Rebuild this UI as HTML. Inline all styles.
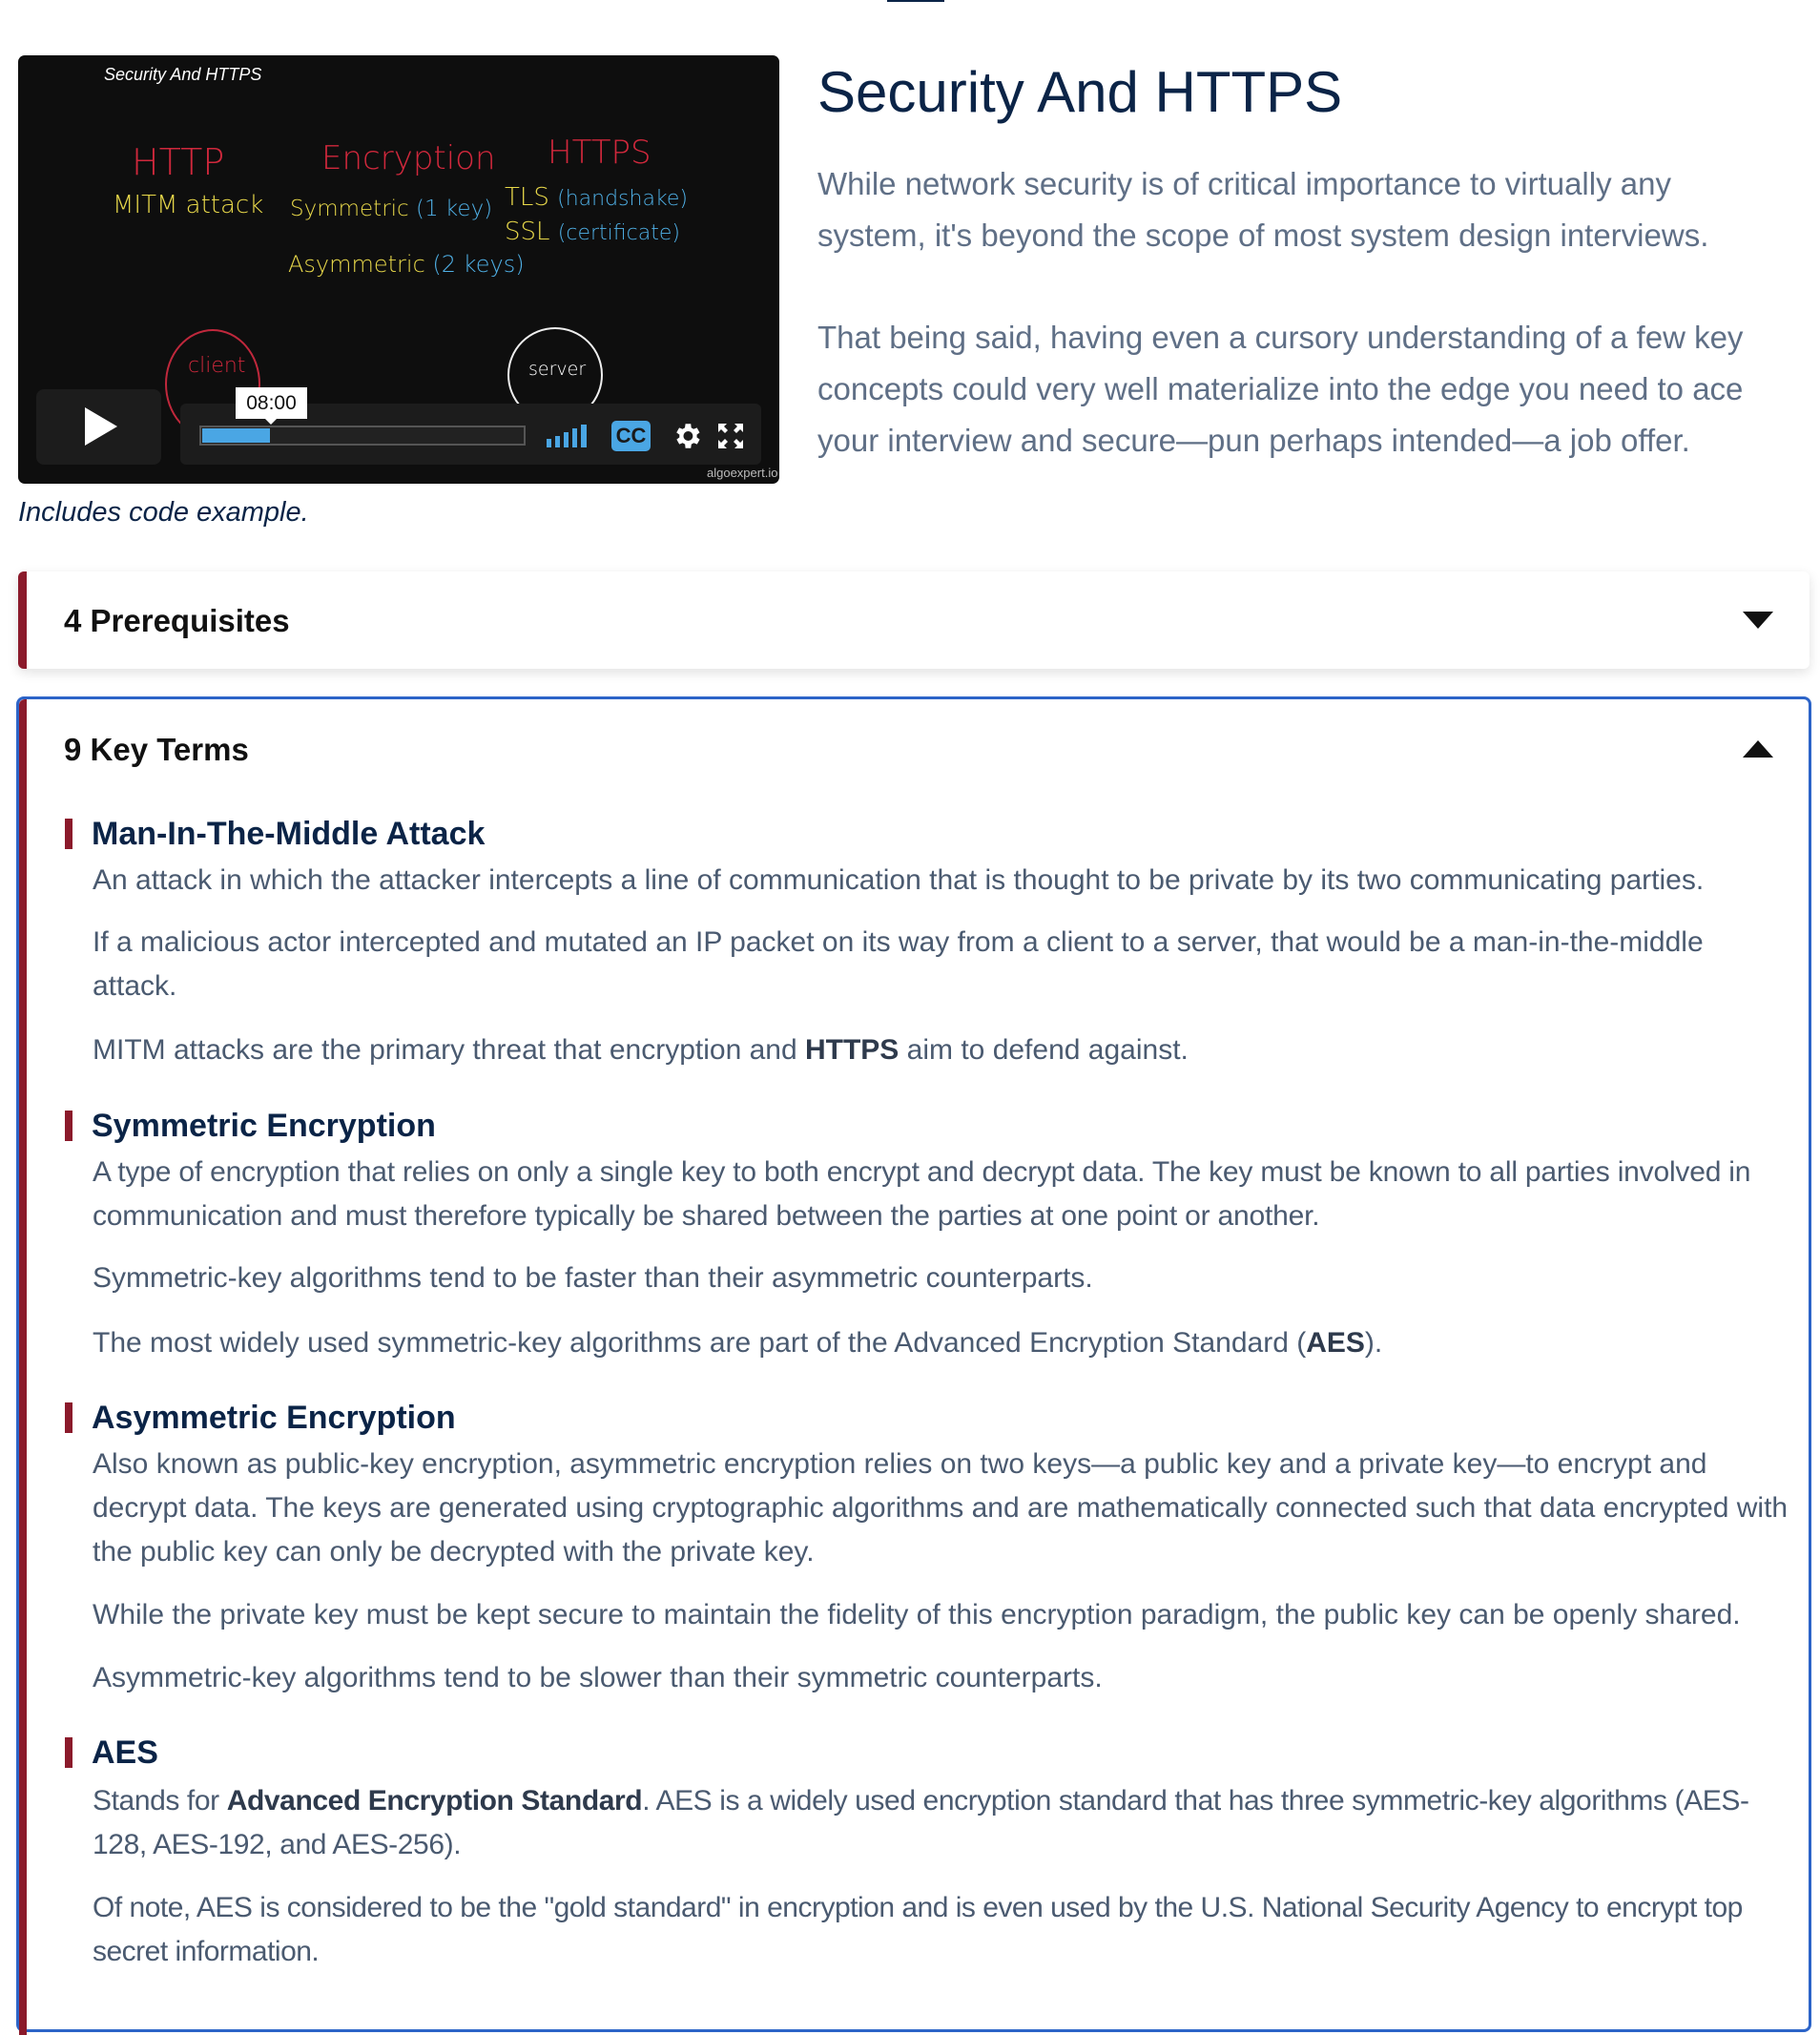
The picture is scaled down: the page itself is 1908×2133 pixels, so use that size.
<!DOCTYPE html>
<html><head><meta charset="utf-8"><style>
*{margin:0;padding:0;box-sizing:border-box}
body{width:1908px;height:2086px;overflow:hidden;background:#fff;font-family:"Liberation Sans",sans-serif;position:relative}
.a{position:absolute;white-space:nowrap}
.p{position:absolute;left:97px;font-size:30px;line-height:46px;color:#4a5a70;white-space:nowrap}
.p b{color:#2e3a4c}
.h{position:absolute;left:68px;font-size:34px;font-weight:bold;color:#0b2447;padding-left:20px;border-left:8px solid #8b1a2b;height:32px;line-height:32px}
.r{color:#5f6f86;font-size:33px;line-height:54px}
.hw{position:absolute;white-space:nowrap;font-family:"DejaVu Sans",sans-serif;font-weight:200}
</style></head><body>
<div class="a" style="left:930px;top:-10px;width:60px;height:12px;background:#0b2447"></div>
<!-- video -->
<div class="a" style="left:19px;top:58px;width:798px;height:449px;background:#0e0e0e;border-radius:7px;overflow:hidden">
 <div class="hw" style="left:90px;top:10px;color:#fff;font-size:18px;font-style:italic;font-family:'Liberation Sans'">Security And HTTPS</div>
 <div class="hw" style="left:119px;top:90px;color:#d0283c;font-size:38px">HTTP</div>
 <div class="hw" style="left:318px;top:88px;color:#d0283c;font-size:34px">Encryption</div>
 <div class="hw" style="left:555px;top:82px;color:#d0283c;font-size:34px">HTTPS</div>
 <div class="hw" style="left:99px;top:142px;color:#e8d84a;font-size:26px">MITM attack</div>
 <div class="hw" style="left:285px;top:148px;color:#e8d84a;font-size:23px">Symmetric <span style="color:#4fb0e6">(1 key)</span></div>
 <div class="hw" style="left:510px;top:134px;color:#e8d84a;font-size:26px">TLS <span style="color:#4fb0e6;font-size:22px">(handshake)</span></div>
 <div class="hw" style="left:510px;top:170px;color:#e8d84a;font-size:26px">SSL <span style="color:#4fb0e6;font-size:22px">(certificate)</span></div>
 <div class="hw" style="left:283px;top:205px;color:#e8d84a;font-size:24px">Asymmetric <span style="color:#4fb0e6">(2 keys)</span></div>
 <div class="a" style="left:154px;top:287px;width:100px;height:115px;border:2px solid #c0283c;border-radius:50%"></div>
 <div class="hw" style="left:178px;top:313px;color:#d0283c;font-size:22px">client</div>
 <div class="a" style="left:513px;top:285px;width:100px;height:100px;border:2px solid #eee;border-radius:50%"></div>
 <div class="hw" style="left:535px;top:318px;color:#fff;font-size:19px">server</div>
 <div class="a" style="left:19px;top:350px;width:131px;height:79px;background:#1c1c1c;border-radius:8px"></div>
 <svg class="a" style="left:66px;top:367px" width="40" height="44"><path d="M4 2L38 22L4 42Z" fill="#fff"/></svg>
 <div class="a" style="left:170px;top:365px;width:609px;height:64px;background:#1c1c1c;border-radius:6px"></div>
 <div class="a" style="left:190px;top:388px;width:342px;height:21px;border:2px solid #555;background:#222"></div>
 <div class="a" style="left:193px;top:391px;width:71px;height:15px;background:#4aa6e4"></div>
 <div class="a" style="left:228px;top:348px;width:75px;height:33px;background:#fff;font-size:21px;color:#111;text-align:center;line-height:33px">08:00</div>
 <svg class="a" style="left:258px;top:380px" width="14" height="8"><path d="M0 0L14 0L7 7Z" fill="#fff"/></svg>
 <svg class="a" style="left:554px;top:385px" width="48" height="26" fill="#4aa6e4"><rect x="0" y="17" width="5" height="9"/><rect x="9" y="14" width="5" height="12"/><rect x="18" y="10" width="5" height="16"/><rect x="27" y="6" width="5" height="20"/><rect x="36" y="2" width="6" height="24"/></svg>
 <div class="a" style="left:622px;top:383px;width:41px;height:32px;background:#4aa6e4;border-radius:5px;color:#1a1a1a;font-weight:bold;font-size:22px;text-align:center;line-height:32px">CC</div>
 <svg class="a" style="left:684px;top:382px" width="34" height="34" viewBox="0 0 24 24"><path fill="#fff" d="M19.4 13a7.5 7.5 0 000-2l2.1-1.6-2-3.5-2.5 1a7 7 0 00-1.7-1L15 3h-4l-.4 2.9a7 7 0 00-1.7 1l-2.5-1-2 3.5L6.6 11a7.5 7.5 0 000 2l-2.1 1.6 2 3.5 2.5-1a7 7 0 001.7 1L11 21h4l.4-2.9a7 7 0 001.7-1l2.5 1 2-3.5zM13 15.5a3.5 3.5 0 110-7 3.5 3.5 0 010 7z"/></svg>
 <svg class="a" style="left:734px;top:386px" width="26" height="26" fill="#fff"><path d="M0 0h9l-3 3 4 4-3 3-4-4-3 3zM26 0v9l-3-3-4 4-3-3 4-4-3-3zM0 26v-9l3 3 4-4 3 3-4 4 3 3zM26 26h-9l3-3-4-4 3-3 4 4 3-3z"/></svg>
 <div class="hw" style="left:722px;top:430px;color:#bbb;font-size:13px;font-family:'Liberation Sans'">algoexpert.io</div>
</div>
<div class="a" style="left:19px;top:521px;font-size:29px;font-style:italic;color:#0b2447">Includes code example.</div>
<div class="a" style="left:857px;top:59px;font-size:60px;color:#0b2447;line-height:76px">Security And HTTPS</div>
<div class="a r" style="left:857px;top:166px">While network security is of critical importance to virtually any<br>system, it's beyond the scope of most system design interviews.</div>
<div class="a r" style="left:857px;top:327px">That being said, having even a cursory understanding of a few key<br>concepts could very well materialize into the edge you need to ace<br>your interview and secure—pun perhaps intended—a job offer.</div>
<!-- prerequisites -->
<div class="a" style="left:19px;top:599px;width:1878px;height:102px;background:#fff;border-left:9px solid #8b1a2b;border-radius:6px;box-shadow:0 4px 12px rgba(0,0,0,.12)"></div>
<div class="a" style="left:67px;top:632px;font-size:33px;font-weight:bold;color:#111">4 Prerequisites</div>
<svg class="a" style="left:1827px;top:641px" width="32" height="18"><path d="M0 0h32L16 18Z" fill="#111"/></svg>
<!-- key terms -->
<div class="a" style="left:17px;top:730px;width:1882px;height:1400px;border:3px solid #2c64c8;border-radius:8px"></div>
<div class="a" style="left:20px;top:733px;width:8px;height:1400px;background:#8b1a2b;border-top-left-radius:6px"></div>
<div class="a" style="left:67px;top:767px;font-size:33px;font-weight:bold;color:#111">9 Key Terms</div>
<svg class="a" style="left:1827px;top:776px" width="32" height="18"><path d="M0 18h32L16 0Z" fill="#111"/></svg>

<div class="h" style="top:858px">Man-In-The-Middle Attack</div>
<div class="p" style="top:900px">An attack in which the attacker intercepts a line of communication that is thought to be private by its two communicating parties.</div>
<div class="p" style="top:965px">If a malicious actor intercepted and mutated an IP packet on its way from a client to a server, that would be a man-in-the-middle<br>attack.</div>
<div class="p" style="top:1078px">MITM attacks are the primary threat that encryption and <b>HTTPS</b> aim to defend against.</div>

<div class="h" style="top:1164px">Symmetric Encryption</div>
<div class="p" style="top:1206px;letter-spacing:-0.2px">A type of encryption that relies on only a single key to both encrypt and decrypt data. The key must be known to all parties involved in<br>communication and must therefore typically be shared between the parties at one point or another.</div>
<div class="p" style="top:1317px">Symmetric-key algorithms tend to be faster than their asymmetric counterparts.</div>
<div class="p" style="top:1385px">The most widely used symmetric-key algorithms are part of the Advanced Encryption Standard (<b>AES</b>).</div>

<div class="h" style="top:1470px">Asymmetric Encryption</div>
<div class="p" style="top:1512px">Also known as public-key encryption, asymmetric encryption relies on two keys—a public key and a private key—to encrypt and<br>decrypt data. The keys are generated using cryptographic algorithms and are mathematically connected such that data encrypted with<br>the public key can only be decrypted with the private key.</div>
<div class="p" style="top:1670px">While the private key must be kept secure to maintain the fidelity of this encryption paradigm, the public key can be openly shared.</div>
<div class="p" style="top:1736px">Asymmetric-key algorithms tend to be slower than their symmetric counterparts.</div>

<div class="h" style="top:1821px">AES</div>
<div class="p" style="top:1865px;letter-spacing:-0.4px">Stands for <b>Advanced Encryption Standard</b>. AES is a widely used encryption standard that has three symmetric-key algorithms (AES-<br>128, AES-192, and AES-256).</div>
<div class="p" style="top:1977px;letter-spacing:-0.5px">Of note, AES is considered to be the "gold standard" in encryption and is even used by the U.S. National Security Agency to encrypt top<br>secret information.</div>
</body></html>
